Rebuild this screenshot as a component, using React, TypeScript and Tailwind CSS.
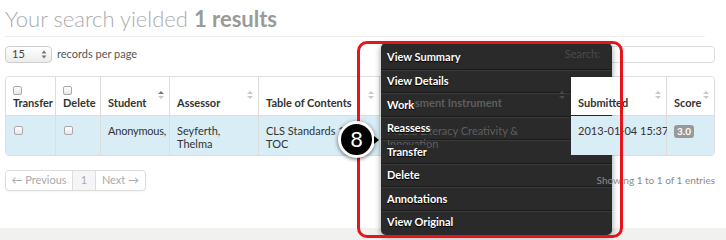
import type { ReactNode } from 'react';

const COLS = [51, 45, 69, 89, 121, 191, 96, 48];

function Box() {
  return <span className="block h-[9px] w-[9px] rounded-[2px] border border-[#a9a9a9] bg-gradient-to-b from-white to-[#e6e6e6]" />;
}

function Sort({ up, ghost }: { up?: boolean; ghost?: boolean }) {
  const base = ghost ? '#4a4a4a' : '#c8c8c8';
  return (
    <svg width="6" height="8" viewBox="0 0 6 8" className={`absolute right-[5px] top-[14px] ${ghost ? 'z-20' : ''}`}>
      <path d="M3 0 L6 3 L0 3 Z" fill={up ? '#777' : base} />
      <path d="M3 8 L6 5 L0 5 Z" fill={base} />
    </svg>
  );
}

function Head({ w, label, box, sort, up, ghost, top, last }: { w: number; label: string; box?: boolean; sort?: boolean; up?: boolean; ghost?: boolean; top?: boolean; last?: boolean }) {
  return (
    <div
      className={`relative flex flex-col justify-end px-[7px] pb-[6px] ${ghost ? '' : 'bg-white'} ${top ? 'z-20' : ''} ${last ? '' : 'border-r border-[#dddddd]'}`}
      style={{ width: w }}
    >
      {box && <div className="mb-[1px]"><Box /></div>}
      <span className={`relative whitespace-nowrap font-bold leading-[13px] ${ghost ? 'z-20 text-[#5e5e5e]' : 'text-[#333]'}`}>{label}</span>
      {sort && <Sort up={up} ghost={ghost} />}
    </div>
  );
}

function Cell({ w, children, top, ghost, last }: { w: number; children: ReactNode; top?: boolean; ghost?: boolean; last?: boolean }) {
  return (
    <div
      className={`px-[7px] pt-[8px] leading-[13px] ${ghost ? '' : 'bg-[#d9edf7]'} ${top ? 'relative z-20' : ''} ${last ? '' : 'border-r border-[#dddddd]'}`}
      style={{ width: w }}
    >
      {children}
    </div>
  );
}

const MENU = ['View Summary', 'View Details', 'Work', 'Reassess', 'Transfer', 'Delete', 'Annotations', 'View Original'];

export default function App() {
  return (
    <div className="relative isolate w-[726px] h-[240px] overflow-hidden bg-white text-[11px] text-[#333]" style={{ fontFamily: 'Lato, "Open Sans", sans-serif' }}>
      <div className="ml-[5px] w-[710px]">
        <h1 className="mt-[6px] text-[22px] leading-[25px] font-light text-[#ababab]">
          Your search yielded <span className="font-bold text-[#9a9a9a]">1 results</span>
        </h1>
        <div className="mt-[5px] w-[700px] border-t border-[#eeeeee]" />

        <div className="mt-[9px] flex h-[17px] items-center justify-between">
          <div className="flex items-center gap-[5px]">
            <div className="flex h-[17px] w-[47px] items-center justify-between rounded-[4px] border border-[#cfcfcf] bg-gradient-to-b from-white to-[#ececec] pl-[6px] pr-[4px] text-[#444]">
              <span>15</span>
              <svg width="6" height="9" viewBox="0 0 6 9">
                <path d="M3 0.5 L5.5 3.5 L0.5 3.5 Z" fill="#777" />
                <path d="M3 8.5 L5.5 5.5 L0.5 5.5 Z" fill="#777" />
              </svg>
            </div>
            <span className="text-[#555]">records per page</span>
          </div>
          <div className="flex items-center gap-[4px]">
            <span className="relative z-20 text-[#4a4a4a]">Search:</span>
            <div className="h-[17px] w-[111px] rounded-[4px] border border-[#dddddd] bg-white" />
          </div>
        </div>

        <div className="mt-[13px] overflow-hidden rounded-[4px] border border-[#dddddd]">
          <div className="flex h-[39px] border-b border-[#dddddd]">
            <Head w={COLS[0] - 1} label="Transfer" box />
            <Head w={COLS[1]} label="Delete" box />
            <Head w={COLS[2]} label="Student" sort up />
            <Head w={COLS[3]} label="Assessor" sort />
            <Head w={COLS[4]} label="Table of Contents" sort />
            <Head w={COLS[5]} label="Assessment Instrument" sort ghost />
            <Head w={COLS[6]} label="Submitted" sort top />
            <Head w={COLS[7] - 1} label="Score" sort top last />
          </div>
          <div className="flex h-[39px]">
            <Cell w={COLS[0] - 1}><div className="pl-[1px] pt-[2px]"><Box /></div></Cell>
            <Cell w={COLS[1]}><div className="pl-[1px] pt-[2px]"><Box /></div></Cell>
            <Cell w={COLS[2]}><span className="whitespace-nowrap tracking-[-0.2px]">Anonymous,</span></Cell>
            <Cell w={COLS[3]}>Seyferth,<br />Thelma</Cell>
            <Cell w={COLS[4]}>CLS Standards 1 &amp;<br />TOC</Cell>
            <Cell w={COLS[5]} ghost><span className="relative z-20 text-[#5e5e5e]">Media Literacy Creativity &amp;<br />Innovation</span></Cell>
            <Cell w={COLS[6]} top><span className="whitespace-nowrap">2013-01-04 15:37</span></Cell>
            <Cell w={COLS[7] - 1} top last>
              <span className="inline-block rounded-[3px] bg-[#999] px-[3px] text-[10px] font-bold leading-[13px] text-white">3.0</span>
            </Cell>
          </div>
        </div>

        <div className="mt-[14px] flex items-center justify-between">
          <div className="flex h-[21px] overflow-hidden rounded-[4px] border border-[#dddddd] text-[#aaa] shadow-[0_1px_2px_rgba(0,0,0,0.05)]">
            <span className="flex w-[67px] items-center justify-center border-r border-[#dddddd]">← Previous</span>
            <span className="flex w-[23px] items-center justify-center border-r border-[#dddddd] bg-[#f5f5f5]">1</span>
            <span className="flex w-[49px] items-center justify-center">Next →</span>
          </div>
          <span className="relative z-20 text-[10px] text-[#8a8a8a]">Showing 1 to 1 of 1 entries</span>
        </div>
      </div>

      <div className="mt-[37px] h-[14px] bg-[#f1f1ef]" />

      {/* context menu: sits under the table text, labels on top */}
      <div className="absolute left-[381px] top-[43px] h-[192px] w-[231px] rounded-[5px] bg-[#2a2a2a] py-[2px] shadow-[0_2px_6px_rgba(0,0,0,0.4)]">
        {MENU.map((m, i) => (
          <div
            key={m}
            className={`flex h-[23.5px] items-center px-[6px] ${i ? 'border-t border-[#1a1a1a] shadow-[inset_0_1px_0_#3b3b3b]' : ''}`}
          >
            <span className="relative z-30 bg-[#2a2a2a] font-bold leading-[13px] text-white [text-shadow:0_1px_1px_#000]">{m}</span>
          </div>
        ))}
      </div>

      {/* annotation frame */}
      <div className="pointer-events-none absolute left-[357px] top-[41px] z-40 h-[197px] w-[266px] rounded-[10px] border-[3px] border-[#e8141c]" />

      {/* callout */}
      <div className="absolute left-[338px] top-[121px] z-50 flex items-center">
        <div className="flex h-[37px] w-[37px] items-center justify-center rounded-full border-[3px] border-white bg-black text-[22px] leading-none text-white shadow-[0_1px_4px_rgba(0,0,0,0.6)]" style={{ fontFamily: '"Liberation Sans", sans-serif' }}>
          8
        </div>
        <svg width="5" height="8" viewBox="0 0 5 8" className="-ml-[1px]">
          <path d="M0 0 L5 4 L0 8 Z" fill="#000" />
        </svg>
      </div>
    </div>
  );
}
